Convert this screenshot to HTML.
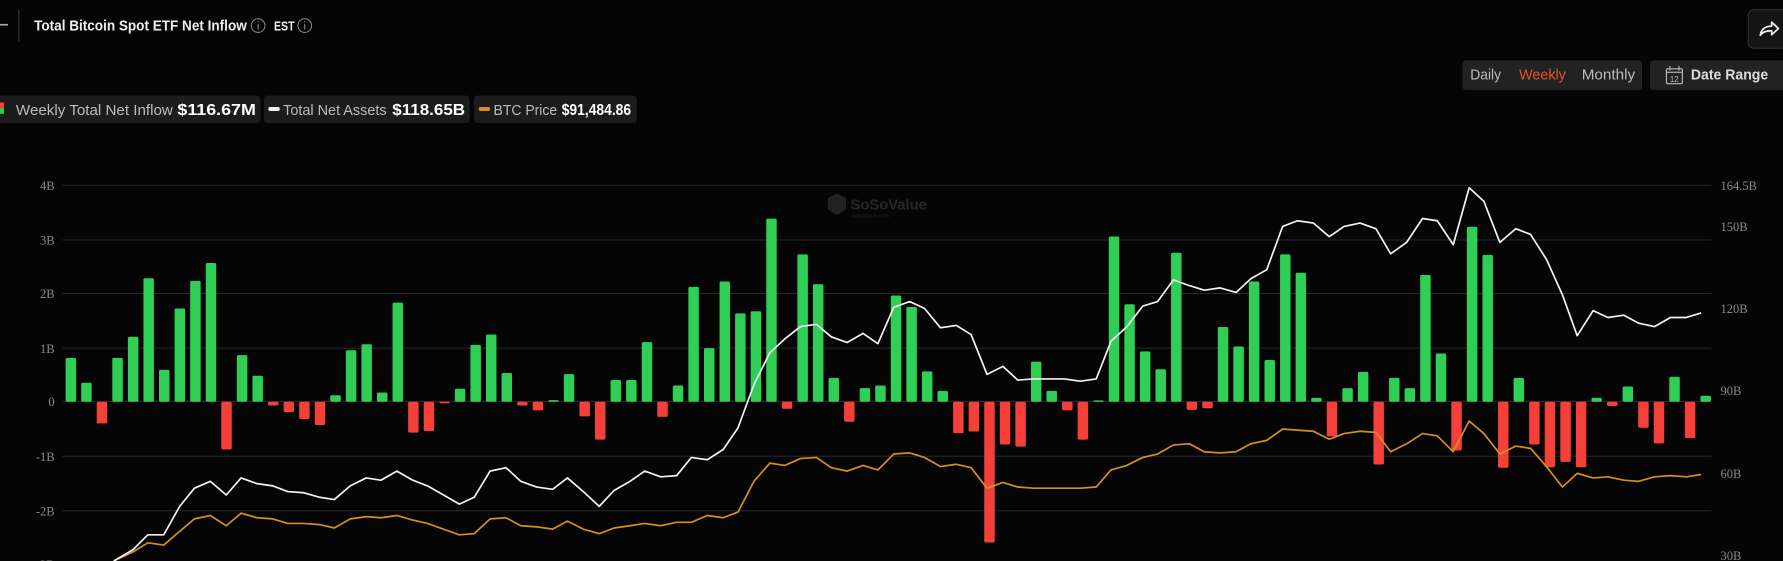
<!DOCTYPE html>
<html><head><meta charset="utf-8"><style>
html,body{margin:0;padding:0;background:#050505;overflow:hidden}
svg{display:block}
.t{font-family:"Liberation Sans",sans-serif}
.ax{font-family:"Liberation Serif",serif;font-size:11px;fill:#8a8a8a}
</style></head><body>
<svg id="s" width="1783" height="561" viewBox="0 0 1568 493" preserveAspectRatio="none" xmlns="http://www.w3.org/2000/svg">
<rect width="1568" height="493" fill="#050505"/>
<!-- header -->
<rect x="0" y="21" width="7" height="1.5" fill="#aaa"/>
<rect x="16" y="8" width="1" height="28" fill="#333"/>
<text class="t" x="30" y="27" font-size="13" font-weight="bold" fill="#eee" textLength="187" lengthAdjust="spacingAndGlyphs">Total Bitcoin Spot ETF Net Inflow</text>
<circle cx="227" cy="22.5" r="6" fill="none" stroke="#888" stroke-width="0.9"/>
<rect x="226.5" y="21" width="1" height="5" fill="#888"/><rect x="226.5" y="18.5" width="1" height="1" fill="#888"/>
<text class="t" x="241" y="27" font-size="11.5" font-weight="bold" fill="#eee" textLength="18" lengthAdjust="spacingAndGlyphs">EST</text>
<circle cx="268" cy="22.5" r="6" fill="none" stroke="#888" stroke-width="0.9"/>
<rect x="267.5" y="21" width="1" height="5" fill="#888"/><rect x="267.5" y="18.5" width="1" height="1" fill="#888"/>
<rect x="1537.5" y="8.5" width="34" height="34" rx="5" fill="#141414" stroke="#2e2e2e"/>
<path d="M1548 31 C1549 25 1553 23 1558 23 L1558 19.5 L1564 25 L1558 30.5 L1558 27 C1553 27 1550 28 1548 31 Z" fill="none" stroke="#eee" stroke-width="1.5" stroke-linejoin="round"/>
<rect x="1286" y="53" width="158" height="26" rx="3" fill="#222"/>
<text class="t" x="1293" y="70" font-size="13" fill="#bbb" textLength="27" lengthAdjust="spacingAndGlyphs">Daily</text>
<text class="t" x="1336" y="70" font-size="13" fill="#e8502e" textLength="41" lengthAdjust="spacingAndGlyphs">Weekly</text>
<text class="t" x="1391" y="70" font-size="13" fill="#bbb" textLength="47" lengthAdjust="spacingAndGlyphs">Monthly</text>
<rect x="1451" y="53" width="125" height="26" rx="3" fill="#222"/>
<rect x="1465.5" y="60.5" width="14" height="13" rx="1" fill="none" stroke="#bbb"/>
<rect x="1465.5" y="63" width="14" height="1" fill="#bbb"/>
<rect x="1468" y="58" width="1" height="4" fill="#bbb"/><rect x="1476" y="58" width="1" height="4" fill="#bbb"/>
<text class="t" x="1468.5" y="72" font-size="7" fill="#bbb">12</text>
<text class="t" x="1487" y="70" font-size="13" font-weight="bold" fill="#ddd" textLength="68" lengthAdjust="spacingAndGlyphs">Date Range</text>
<!-- legend -->
<rect x="-5" y="84" width="234" height="24" rx="3" fill="#1c1c1c"/>
<rect x="0" y="90" width="3.5" height="5" fill="#f5403a"/><rect x="0" y="95" width="3.5" height="5" fill="#2fcf56"/>
<text class="t" x="14" y="101" font-size="13" fill="#bbb" textLength="138" lengthAdjust="spacingAndGlyphs">Weekly Total Net Inflow</text>
<text class="t" x="156" y="101" font-size="14" font-weight="bold" fill="#fff" textLength="69" lengthAdjust="spacingAndGlyphs">$116.67M</text>
<rect x="232" y="84" width="181" height="24" rx="3" fill="#1c1c1c"/>
<rect x="236" y="94" width="10" height="3.5" rx="1.5" fill="#eee"/>
<text class="t" x="249" y="101" font-size="13" fill="#bbb" textLength="91" lengthAdjust="spacingAndGlyphs">Total Net Assets</text>
<text class="t" x="345" y="101" font-size="14" font-weight="bold" fill="#fff" textLength="64" lengthAdjust="spacingAndGlyphs">$118.65B</text>
<rect x="417" y="84" width="143" height="24" rx="3" fill="#1c1c1c"/>
<rect x="421" y="94" width="10" height="3.5" rx="1.5" fill="#d4901c"/>
<text class="t" x="434" y="101" font-size="13" fill="#bbb" textLength="56" lengthAdjust="spacingAndGlyphs">BTC Price</text>
<text class="t" x="494" y="101" font-size="14" font-weight="bold" fill="#fff" textLength="61" lengthAdjust="spacingAndGlyphs">$91,484.86</text>
<!-- watermark -->
<g opacity="0.35">
<path d="M728 174 L736 170 L744 174 L744 184 L736 189 L728 184 Z" fill="#555"/>
<text class="t" x="748" y="184" font-size="13" font-weight="bold" fill="#666">SoSoValue</text>
<text class="t" x="749" y="191" font-size="5" fill="#666">sosovalue.com</text>
</g>
<g id="grid"></g><g id="bars"></g><g id="lines"></g>
</svg>
<script>
var NS="http://www.w3.org/2000/svg";
function el(p,n,a,t){var e=document.createElementNS(NS,n);for(var k in a)e.setAttribute(k,a[k]);if(t)e.textContent=t;document.getElementById(p).appendChild(e);}
var gy={"4B":163,"3B":211,"2B":258,"1B":306,"0":353,"-1B":401,"-2B":449,"-3B":496};
for(var k in gy){el("grid","rect",{x:55,y:gy[k]-0.5,width:1450,height:0.8,fill:"#2c2c2c"});el("grid","text",{x:48,y:gy[k]+4,"text-anchor":"end","class":"ax"},k);}
var rl=[["164.5B",167],["150B",203],["120B",275],["90B",347],["60B",420],["30B",492]];
rl.forEach(function(r){el("grid","text",{x:1513,y:r[1],"class":"ax"},r[0]);});
var v=[0.81,0.35,-0.40,0.81,1.2,2.28,0.59,1.72,2.23,2.56,-0.88,0.86,0.48,-0.07,-0.19,-0.32,-0.43,0.12,0.95,1.06,0.17,1.83,-0.57,-0.54,-0.03,0.24,1.05,1.24,0.53,-0.07,-0.16,0.03,0.51,-0.27,-0.70,0.4,0.4,1.1,-0.28,0.30,2.12,0.99,2.22,1.63,1.67,3.38,-0.13,2.72,2.17,0.44,-0.37,0.25,0.30,1.96,1.75,0.56,0.2,-0.58,-0.55,-2.6,-0.79,-0.83,0.74,0.2,-0.16,-0.70,0.01,3.05,1.8,0.93,0.6,2.75,-0.15,-0.12,1.38,1.02,2.22,0.77,2.72,2.38,0.07,-0.64,0.25,0.55,-1.16,0.44,0.25,2.34,0.89,-0.9,3.23,2.71,-1.22,0.44,-0.79,-1.21,-1.11,-1.21,0.07,-0.08,0.28,-0.48,-0.77,0.46,-0.67,0.11];
var step=(1500-62.3)/105;
v.forEach(function(b,i){var cx=62.3+i*step,h=Math.max(Math.abs(b)*47.6,1.2);
el("bars","rect",{x:cx-4.6,y:b>=0?353-h:353,width:9.2,height:h,rx:1.3,fill:b>=0?"#2fcf56":"#f5403a"});});
var W=[[100,493],[117,483],[130,470],[144,470],[158,445],[171,429],[185,423],[199,435],[212,420],[226,425],[240,427],[253,432],[267,433],[281,437],[294,439],[308,427],[322,420],[335,422],[349,414],[363,422],[376,427],[390,435],[404,443],[417,437],[431,414],[445,411],[458,423],[472,428],[486,430],[499,420],[513,432],[527,445],[540,431],[554,423],[567,414],[581,419],[595,418],[608,402],[622,404],[636,395],[649,376],[663,338],[677,310],[690,298],[704,287],[718,285],[731,296],[745,301],[759,293],[772,302],[786,270],[800,265],[813,271],[827,288],[841,286],[854,294],[868,329],[882,322],[895,334],[909,333],[923,333],[936,333],[950,335],[964,333],[977,300],[991,287],[1005,269],[1018,265],[1032,246],[1046,251],[1059,255],[1073,253],[1087,257],[1100,245],[1114,237],[1128,199],[1141,194],[1155,196],[1169,208],[1182,199],[1196,196],[1210,201],[1223,223],[1237,213],[1251,192],[1264,194],[1278,215],[1292,165],[1305,177],[1319,213],[1333,201],[1346,206],[1360,228],[1374,259],[1387,295],[1401,273],[1414,279],[1428,277],[1441,284],[1455,287],[1469,279],[1483,279],[1496,275]];
var O=[[100,493],[117,485],[130,477],[144,479],[158,467],[171,456],[185,453],[199,462],[212,451],[226,455],[240,456],[253,460],[267,460],[281,461],[294,464],[308,456],[322,454],[335,455],[349,453],[363,457],[376,460],[390,465],[404,470],[417,469],[431,456],[445,455],[458,462],[472,463],[486,465],[499,458],[513,465],[527,469],[540,464],[554,462],[567,460],[581,462],[595,459],[608,459],[622,453],[636,455],[649,450],[663,423],[677,407],[690,409],[704,403],[718,402],[731,411],[745,414],[759,409],[772,413],[786,399],[800,398],[813,402],[827,410],[841,408],[854,411],[868,429],[882,424],[895,428],[909,429],[923,429],[936,429],[950,429],[964,428],[977,413],[991,409],[1005,402],[1018,399],[1032,391],[1046,390],[1059,397],[1073,398],[1087,397],[1100,390],[1114,387],[1128,377],[1141,378],[1155,379],[1169,386],[1182,381],[1196,379],[1210,380],[1223,397],[1237,390],[1251,381],[1264,383],[1278,397],[1292,370],[1305,381],[1319,399],[1333,392],[1346,394],[1360,410],[1374,428],[1387,416],[1401,420],[1414,419],[1428,422],[1441,423],[1455,419],[1469,418],[1483,419],[1496,417]];
el("lines","polyline",{points:O.join(" "),fill:"none",stroke:"#d4901c","stroke-width":1.5,"stroke-linejoin":"round"});
el("lines","polyline",{points:W.join(" "),fill:"none",stroke:"#f2f2f2","stroke-width":1.5,"stroke-linejoin":"round"});
</script>
</body></html>
